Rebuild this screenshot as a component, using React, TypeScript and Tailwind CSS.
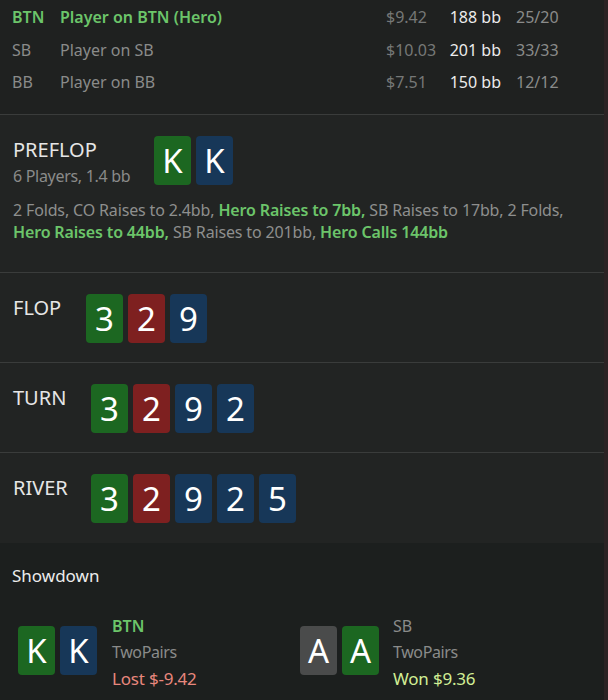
import React from 'react';

type CardColor = 'green' | 'red' | 'blue' | 'gray';

const cardBg: Record<CardColor, string> = {
  green: 'bg-[#1c6721]',
  red: 'bg-[#7e2020]',
  blue: 'bg-[#173758]',
  gray: 'bg-[#4a4b4b]',
};

const Card: React.FC<{ rank: string; color: CardColor }> = ({ rank, color }) => (
  <div
    className={`w-[37px] h-[49px] rounded-[4px] flex items-center justify-center text-[33px] leading-none text-white ${cardBg[color]}`}
  >
    {rank}
  </div>
);

const Board: React.FC<{ cards: [string, CardColor][] }> = ({ cards }) => (
  <div className="flex gap-[5px]">
    {cards.map(([r, c], i) => (
      <Card key={i} rank={r} color={c} />
    ))}
  </div>
);

const players = [
  { pos: 'BTN', name: 'Player on BTN (Hero)', money: '$9.42', bb: '188 bb', ratio: '25/20', hero: true },
  { pos: 'SB', name: 'Player on SB', money: '$10.03', bb: '201 bb', ratio: '33/33', hero: false },
  { pos: 'BB', name: 'Player on BB', money: '$7.51', bb: '150 bb', ratio: '12/12', hero: false },
];

const streets: { label: string; cards: [string, CardColor][] }[] = [
  { label: 'FLOP', cards: [['3', 'green'], ['2', 'red'], ['9', 'blue']] },
  { label: 'TURN', cards: [['3', 'green'], ['2', 'red'], ['9', 'blue'], ['2', 'blue']] },
  { label: 'RIVER', cards: [['3', 'green'], ['2', 'red'], ['9', 'blue'], ['2', 'blue'], ['5', 'blue']] },
];

export default function App() {
  return (
    <div
      className="w-[608px] h-[700px] overflow-hidden flex bg-[#2b2324]"
      style={{ fontFamily: '"Noto Sans", "Open Sans", sans-serif' }}
    >
      <div className="w-[604px] flex flex-col bg-[#1f2120]">
        {/* players table */}
        <div className="pt-px pb-[15px] border-b border-[#3a3c3b] bg-[#1f2120]">
          {players.map((p) => (
            <div key={p.pos} className="h-[32.5px] flex items-center pl-3 text-[16px]">
              <span className={`w-[48px] ${p.hero ? 'text-[#6cc56a] font-semibold' : 'text-[#8a8b8a]'}`}>{p.pos}</span>
              <span className={`flex-1 ${p.hero ? 'text-[#6cc56a] font-semibold' : 'text-[#8a8b8a]'}`}>{p.name}</span>
              <span className="w-[61px] text-[#767877]">{p.money}</span>
              <span className="w-[54px] text-right text-[#ececec]">{p.bb}</span>
              <span className="w-[103px] pl-[15px] text-[#8a8b8a]">{p.ratio}</span>
            </div>
          ))}
        </div>

        {/* preflop */}
        <div className="pt-[21px] pb-[29px] pl-[13px] pr-4 border-b border-[#3a3c3b] bg-[#222423]">
          <div className="flex items-start">
            <div className="w-[141px]">
              <div className="text-[20px] leading-[28px] text-[#e6e6e6]">PREFLOP</div>
              <div className="text-[16px] leading-[24px] tracking-[-0.3px] text-[#8a8b8a]">6 Players, 1.4 bb</div>
            </div>
            <Board cards={[['K', 'green'], ['K', 'blue']]} />
          </div>
          <p className="mt-[11px] text-[16px] leading-[22px] tracking-[-0.15px] text-[#8e8f8e]">
            2 Folds, CO Raises to 2.4bb, <span className="text-[#6cc56a] font-semibold">Hero Raises to 7bb,</span> SB
            Raises to 17bb, 2 Folds, <span className="text-[#6cc56a] font-semibold">Hero Raises to 44bb,</span> SB Raises
            to 201bb, <span className="text-[#6cc56a] font-semibold">Hero Calls 144bb</span>
          </p>
        </div>

        {/* streets */}
        {streets.map((s, i) => (
          <div
            key={s.label}
            className={`pt-[21px] pl-[13px] flex items-start bg-[#222423] ${i < 2 ? 'pb-[19px] border-b border-[#3a3c3b]' : 'pb-[20px]'}`}
          >
            <div className={`text-[20px] leading-[28px] text-[#e6e6e6] ${s.label === 'FLOP' ? 'w-[73px]' : 'w-[78px]'}`}>
              {s.label}
            </div>
            <Board cards={s.cards} />
          </div>
        ))}

        {/* showdown */}
        <div className="flex-1 bg-[#1c1f1e] pt-[21px]">
          <div className="pl-3 text-[17px] leading-[24px] text-[#ececec]">Showdown</div>
          <div className="mt-[21px] pl-[18px] flex">
            <div className="w-[282px] flex items-center">
              <Board cards={[['K', 'green'], ['K', 'blue']]} />
              <div className="ml-[15px] text-[16px] leading-[26.5px] mt-1">
                <div className="text-[#6cc56a] font-semibold">BTN</div>
                <div className="text-[#8a8b8a] tracking-[-0.4px]">TwoPairs</div>
                <div className="text-[17px] tracking-[-0.2px] text-[#e8877d]">Lost $-9.42</div>
              </div>
            </div>
            <div className="flex items-center">
              <Board cards={[['A', 'gray'], ['A', 'green']]} />
              <div className="ml-[14px] text-[16px] leading-[26.5px] mt-1">
                <div className="text-[#8a8b8a]">SB</div>
                <div className="text-[#8a8b8a] tracking-[-0.4px]">TwoPairs</div>
                <div className="text-[17px] tracking-[-0.2px] text-[#d2ee95]">Won $9.36</div>
              </div>
            </div>
          </div>
        </div>
      </div>
      <div className="w-[4px] bg-[#2b2324]" />
    </div>
  );
}
